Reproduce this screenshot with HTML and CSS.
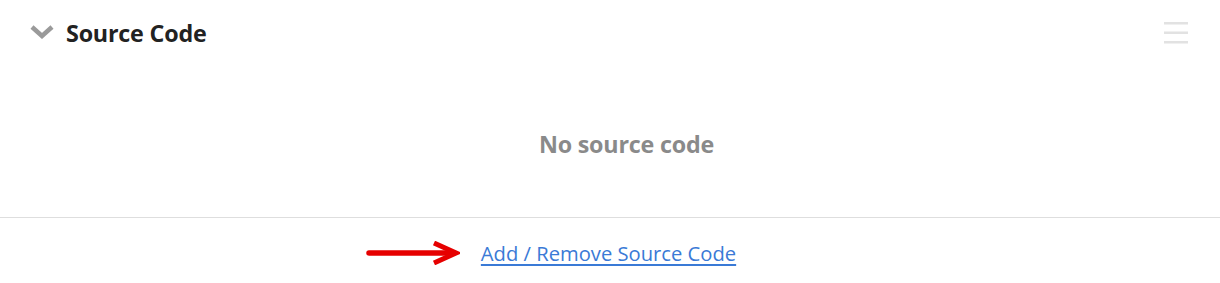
FILE: index.html
```html
<!DOCTYPE html>
<html>
<head>
<meta charset="utf-8">
<link rel="stylesheet" href="styles.css">
</head>
<body>
<div class="panel">
  <div class="header">
    <div class="title-wrap">
      <svg class="chevron" width="24" height="14" viewBox="0 0 24 14"><path d="M2 2 L12 11 L22 2" fill="none" stroke="#9a9a9a" stroke-width="4.5" stroke-linejoin="miter"/></svg>
      <h2 class="title">Source Code</h2>
    </div>
    <svg class="menu" width="24" height="22" viewBox="0 0 24 22"><rect x="0" y="0" width="24" height="2.5" fill="#e2e2e2"/><rect x="0" y="9.5" width="24" height="2.5" fill="#e2e2e2"/><rect x="0" y="19" width="24" height="2.5" fill="#e2e2e2"/></svg>
  </div>
  <div class="body">
    <p class="empty">No source code</p>
  </div>
  <div class="footer">
    <div class="link-wrap">
      <svg class="arrow" width="94" height="24" viewBox="0 0 94 24"><path d="M3 12 L86 12" stroke="#e60000" stroke-width="5.5" stroke-linecap="round"/><path d="M68 2 L90 12 L68 22" fill="none" stroke="#e60000" stroke-width="5" stroke-linejoin="miter"/></svg>
      <a class="link" href="#">Add / Remove Source Code</a>
    </div>
  </div>
</div>
</body>
</html>
```
FILE: styles.css
```css
html, body {
  margin: 0;
  padding: 0;
  background: #fff;
}
body {
  font-family: "Open Sans", "Noto Sans", sans-serif;
}
.panel {
  width: 1220px;
}
.header {
  display: flex;
  align-items: center;
  justify-content: space-between;
  height: 66px;
  padding: 0 32px 0 30px;
  box-sizing: border-box;
}
.title-wrap {
  display: flex;
  align-items: center;
  gap: 12px;
}
.chevron {
  display: block;
  margin-top: -2px;
}
.title {
  margin: 0;
  font-size: 23.3px;
  font-weight: 700;
  color: #222;
  letter-spacing: -0.2px;
}
.menu {
  display: block;
}
.body {
  height: 152px;
  display: flex;
  justify-content: center;
  align-items: center;
  padding-left: 33px;
  padding-top: 4px;
  box-sizing: border-box;
  border-bottom: 1px solid #dedede;
}
.empty {
  margin: 0;
  font-size: 23.3px;
  font-weight: 700;
  color: #8a8a8a;
  letter-spacing: -0.2px;
}
.footer {
  display: flex;
  justify-content: center;
  align-items: center;
  height: 70px;
  padding-right: 3px;
}
.link-wrap {
  position: relative;
}
.arrow {
  display: block;
  position: absolute;
  left: -115px;
  top: 50%;
  margin-top: -12px;
}
.link {
  font-size: 20.2px;
  color: #3a7ad6;
  text-decoration: underline;
  text-underline-offset: 3px;
}
```
